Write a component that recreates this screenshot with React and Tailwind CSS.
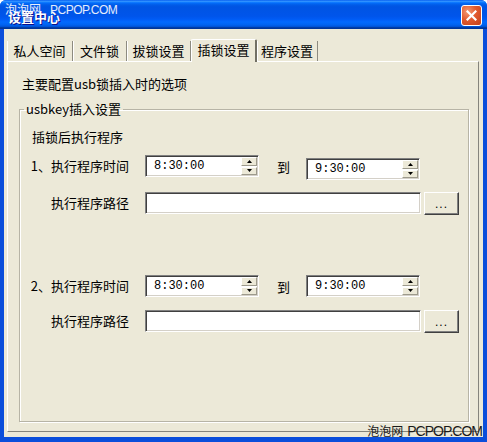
import React from 'react';

const tabs = [
  { label: '私人空间', w: 'w-[66px]' },
  { label: '文件锁', w: 'w-[54px]' },
  { label: '拔锁设置', w: 'w-[64px]' },
  { label: '插锁设置', w: 'w-[66px]', active: true },
  { label: '程序设置', w: 'w-[61px]' },
];

const sunken =
  'border border-t-[#808080] border-l-[#808080] border-r-white border-b-white shadow-[inset_1px_1px_0_#404040,inset_-1px_-1px_0_#D4D0C8] bg-white';

const raised =
  'border border-t-white border-l-white border-r-[#404040] border-b-[#404040] shadow-[inset_-1px_-1px_0_#808080] bg-[#ECE9D8]';

const spinBtn =
  'flex-1 flex items-center justify-center border border-t-white border-l-white border-r-[#9D9A8C] border-b-[#9D9A8C] bg-[#ECE9D8]';

const Arrow = ({ up }) => (
  <svg width="5" height="3" viewBox="0 0 5 3">
    <path d={up ? 'M2.5 0 L5 3 L0 3 Z' : 'M0 0 L5 0 L2.5 3 Z'} fill="#000" />
  </svg>
);

const TimeBox = ({ value, extra = '' }) => (
  <div className={`flex w-[114px] h-[22px] ${sunken} ${extra}`}>
    <span className="flex-1 pl-[8px] leading-[20px] font-['Liberation_Mono',monospace] text-[12px]">{value}</span>
    <div className="flex flex-col w-[16px] py-[1px] mr-[1px] gap-[1px]">
      <div className={spinBtn}>
        <Arrow up />
      </div>
      <div className={spinBtn}>
        <Arrow />
      </div>
    </div>
  </div>
);

const ProgramBlock = ({ num, start, end, first }) => (
  <div className="flex flex-col">
    <div className="flex items-start">
      <span className="w-[109px] text-right leading-[22px]">{num}、执行程序时间</span>
      <TimeBox value={start} extra="ml-[16px]" />
      <span className="ml-[18px] leading-[22px] mt-[1px]">到</span>
      <TimeBox value={end} extra={first ? 'ml-[16px] mt-[3px]' : 'ml-[16px]'} />
    </div>
    <div className="flex items-start mt-[12px]">
      <span className="w-[109px] text-right leading-[22px]">执行程序路径</span>
      <div className={`ml-[16px] w-[276px] h-[22px] ${sunken}`} />
      <button className={`ml-[3px] w-[35px] h-[23px] ${raised} text-[12px] leading-[10px] tracking-[1px] font-['Liberation_Sans',sans-serif]`}>
        ...
      </button>
    </div>
  </div>
);

export default function App() {
  return (
    <div className="relative w-[487px] h-[442px] overflow-hidden rounded-t-[6px] bg-[#0B4EDB] flex flex-col font-['Noto_Sans_CJK_SC',sans-serif] text-[13px] text-black">
      {/* title bar */}
      <div className="relative h-[29px] shrink-0 flex items-center bg-[linear-gradient(to_bottom,#0058ee_0%,#3593ff_4%,#288eff_6%,#127dff_8%,#036ffc_10%,#0262ee_14%,#0057e5_20%,#0054e3_24%,#0055eb_56%,#005bf5_66%,#026afe_76%,#0062ef_86%,#0052d6_92%,#0040ab_94%,#003092_100%)]">
        <span className="ml-[8px] mt-[4px] font-bold text-[13px] leading-[16px] text-white [text-shadow:1px_1px_0_#0F1089]">设置中心</span>
        <span className="absolute left-[5px] top-[1px] text-white/90 text-[12px] leading-[16px]">
          泡泡网<span className="ml-[9px] font-['Liberation_Sans',sans-serif] tracking-[-0.5px]">PCPOP.COM</span>
        </span>
        <button className="ml-auto mr-[5px] mt-[1px] w-[21px] h-[21px] rounded-[3px] border border-white bg-[radial-gradient(circle_at_30%_30%,#F49A74_0%,#E25A2E_45%,#C4401A_100%)] flex items-center justify-center">
          <svg width="11" height="11" viewBox="0 0 11 11">
            <path d="M1.5 1.5 L9.5 9.5 M9.5 1.5 L1.5 9.5" stroke="#fff" strokeWidth="2.2" strokeLinecap="square" />
          </svg>
        </button>
      </div>

      {/* window body */}
      <div className="flex-1 mx-[4px] mb-[5px] bg-[#ECE9D8] flex flex-col pt-[10px] pl-[3px] pr-[4px] pb-[5px]">
        {/* tabs */}
        <div className="flex items-end h-[22px]">
          {tabs.map(t =>
            t.active ? (
              <div
                key={t.label}
                className={`${t.w} relative z-10 h-[23px] -mb-[1px] bg-[#ECE9D8] border-l border-t border-l-white border-t-white border-r-2 border-r-[#716F64] rounded-t-[2px] flex justify-center pt-[2px] leading-[16px]`}
              >
                {t.label}
              </div>
            ) : (
              <div
                key={t.label}
                className={`${t.w} h-[20px] border-r border-r-[#8D8B80] shadow-[inset_1px_0_0_#fff] flex justify-center pt-[2px] leading-[16px]`}
              >
                {t.label}
              </div>
            )
          )}
        </div>

        {/* tab panel */}
        <div className="flex-1 flex flex-col border border-t-white border-l-white border-r-[#85847C] border-b-[#85847C] pt-[14px]">
          <div className="pl-[14px] leading-[16px]">主要配置usb锁插入时的选项</div>

          <fieldset className="mt-[9px] ml-[11px] mb-[9px] w-[450px] flex-1 border border-[#B7B4A6] shadow-[1px_1px_0_#fff,inset_1px_1px_0_#fff]">
            <legend className="ml-[4px] px-[2px] leading-[16px]">usbkey插入设置</legend>
            <div className="pl-[12px] mt-[12px] leading-[16px]">插锁后执行程序</div>
            <div className="mt-[10px]">
              <ProgramBlock num="1" start="8:30:00" end="9:30:00" first />
            </div>
            <div className="mt-[60px]">
              <ProgramBlock num="2" start="8:30:00" end="9:30:00" />
            </div>
          </fieldset>
        </div>
      </div>

      {/* watermark */}
      <span className="absolute right-[5px] bottom-[3px] text-[#1A1A1A] text-[12px] leading-[16px]">
        泡泡网<span className="ml-[4px] text-[14px] font-['Liberation_Sans',sans-serif] tracking-[-1px]">PCPOP.COM</span>
      </span>
    </div>
  );
}
